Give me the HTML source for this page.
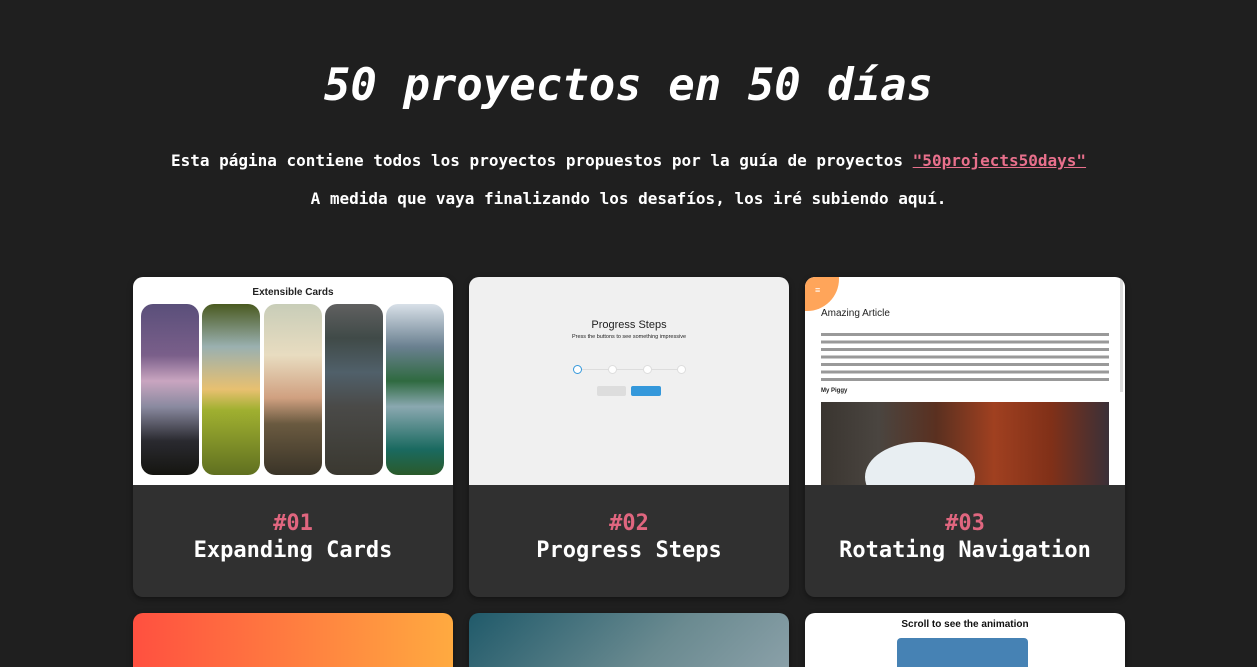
<!DOCTYPE html>
<html><head><meta charset="utf-8"><style>
*{box-sizing:border-box;margin:0;padding:0}
html{width:1257px;height:667px;overflow:hidden;background:#1f1f1f}
body{width:1257px;height:667px;overflow:hidden;position:relative;background:#1f1f1f;font-family:"DejaVu Sans Mono","Liberation Mono",monospace;color:#fff}
h1{position:absolute;top:58px;left:0;width:1257px;text-align:center;font-size:44px;font-style:italic;font-weight:bold;line-height:56px}
.p{position:absolute;left:0;width:1257px;text-align:center;font-size:16px;font-weight:bold;line-height:20px}
.p a{color:#e8708c;text-decoration:underline}
.card{position:absolute;width:320px;border-radius:10px;overflow:hidden;background:#303030;box-shadow:0 2px 6px rgba(0,0,0,.4)}
.img{height:208px;position:relative;overflow:hidden}
.cap{height:112px;text-align:center;font-weight:bold}
.num{color:#e0667f;font-size:22px;line-height:26px;padding-top:26px}
.t{font-size:22px;line-height:28px}
.strip{position:absolute;top:27px;width:58px;height:171px;border-radius:12px}
</style></head><body>
<h1>50 proyectos en 50 días</h1>
<div class="p" style="top:151px">Esta página contiene todos los proyectos propuestos por la guía de proyectos <a>"50projects50days"</a></div>
<div class="p" style="top:189px">A medida que vaya finalizando los desafíos, los iré subiendo aquí.</div>

<div class="card" style="left:133px;top:277px">
 <div class="img" style="background:#fff">
  <div style="position:absolute;top:10px;width:100%;text-align:center;font:bold 10px 'Liberation Sans',sans-serif;color:#222">Extensible Cards</div>
  <div class="strip" style="left:8px;background:linear-gradient(#5a4f7a 0%,#7a5f8a 30%,#c9a5c0 45%,#8a8aa0 60%,#2a2a30 80%,#151510)"></div>
  <div class="strip" style="left:69px;background:linear-gradient(#4a5a20 0%,#9ab0b0 25%,#e8c070 50%,#a0b030 62%,#607020 100%)"></div>
  <div class="strip" style="left:131px;background:linear-gradient(#c8cdb8 0%,#e8dcc0 30%,#d0a080 55%,#6a5a40 70%,#3a3428 100%)"></div>
  <div class="strip" style="left:192px;background:linear-gradient(#606060 0%,#404a48 20%,#50606a 40%,#4a4a48 60%,#3a3830 100%)"></div>
  <div class="strip" style="left:253px;background:linear-gradient(#d8e0e8 0%,#6a8090 25%,#2f6a40 45%,#8aa8b0 60%,#1a6a60 85%,#2a5a2a 100%)"></div>
 </div>
 <div class="cap"><div class="num">#01</div><div class="t">Expanding Cards</div></div>
</div>

<div class="card" style="left:469px;top:277px">
 <div class="img" style="background:#f0f0f0;font-family:'Liberation Sans',sans-serif;color:#222">
  <div style="position:absolute;top:42px;width:100%;text-align:center;font-size:11px">Progress Steps</div>
  <div style="position:absolute;top:57px;width:100%;text-align:center;font-size:5.5px">Press the buttons to see something impressive</div>
  <div style="position:absolute;left:108px;top:92px;width:104px;height:1px;background:#ddd"></div>
  <div style="position:absolute;left:104px;top:88px;width:9px;height:9px;border-radius:50%;border:1px solid #3498db;background:#fff"></div>
  <div style="position:absolute;left:139px;top:88px;width:9px;height:9px;border-radius:50%;border:1px solid #ddd;background:#fff"></div>
  <div style="position:absolute;left:174px;top:88px;width:9px;height:9px;border-radius:50%;border:1px solid #ddd;background:#fff"></div>
  <div style="position:absolute;left:208px;top:88px;width:9px;height:9px;border-radius:50%;border:1px solid #ddd;background:#fff"></div>
  <div style="position:absolute;left:128px;top:109px;width:29px;height:10px;background:#ddd;border-radius:2px"></div>
  <div style="position:absolute;left:162px;top:109px;width:30px;height:10px;background:#3498db;border-radius:2px"></div>
 </div>
 <div class="cap"><div class="num">#02</div><div class="t">Progress Steps</div></div>
</div>

<div class="card" style="left:805px;top:277px">
 <div class="img" style="background:#fff;font-family:'Liberation Sans',sans-serif;color:#222">
  <div style="position:absolute;left:-30px;top:-30px;width:64px;height:64px;border-radius:50%;background:#ffa55a"></div>
  <div style="position:absolute;left:10px;top:8px;color:#fff;font-size:9px">≡</div>
  <div style="position:absolute;left:16px;top:31px;font-size:10px">Amazing Article</div>
  <div style="position:absolute;left:16px;top:54px;width:288px;height:52px;background:repeating-linear-gradient(#fff 0,#fff 2px,#999 2px,#999 5px,#fff 5px,#fff 7.5px)"></div>
  <div style="position:absolute;left:16px;top:111px;font-size:6px;font-weight:bold">My Piggy</div>
  <div style="position:absolute;left:16px;top:125px;width:288px;height:90px;background:linear-gradient(90deg,#3a3530 0%,#4a4540 20%,#5a3020 40%,#a04020 60%,#803018 80%,#3a3038 100%)"></div>
  <div style="position:absolute;left:60px;top:165px;width:110px;height:70px;border-radius:50%;background:#e8eef2"></div>
  <div style="position:absolute;right:2px;top:0;width:3px;height:115px;background:#ddd"></div>
 </div>
 <div class="cap"><div class="num">#03</div><div class="t">Rotating Navigation</div></div>
</div>

<div class="card" style="left:133px;top:613px;height:54px;border-radius:10px 10px 0 0;background:linear-gradient(90deg,#ff5040,#ffaa40)"></div>
<div class="card" style="left:469px;top:613px;height:54px;border-radius:10px 10px 0 0;background:linear-gradient(135deg,#205a6a,#6a8a90 60%,#8aa0a8)"></div>
<div class="card" style="left:805px;top:613px;height:54px;border-radius:10px 10px 0 0;background:#fff">
 <div style="position:absolute;top:6px;width:100%;text-align:center;font:bold 10px 'Liberation Sans',sans-serif;color:#111">Scroll to see the animation</div>
 <div style="position:absolute;left:92px;top:25px;width:131px;height:29px;background:#4682b4;border-radius:4px 4px 0 0"></div>
</div>
</body></html>
